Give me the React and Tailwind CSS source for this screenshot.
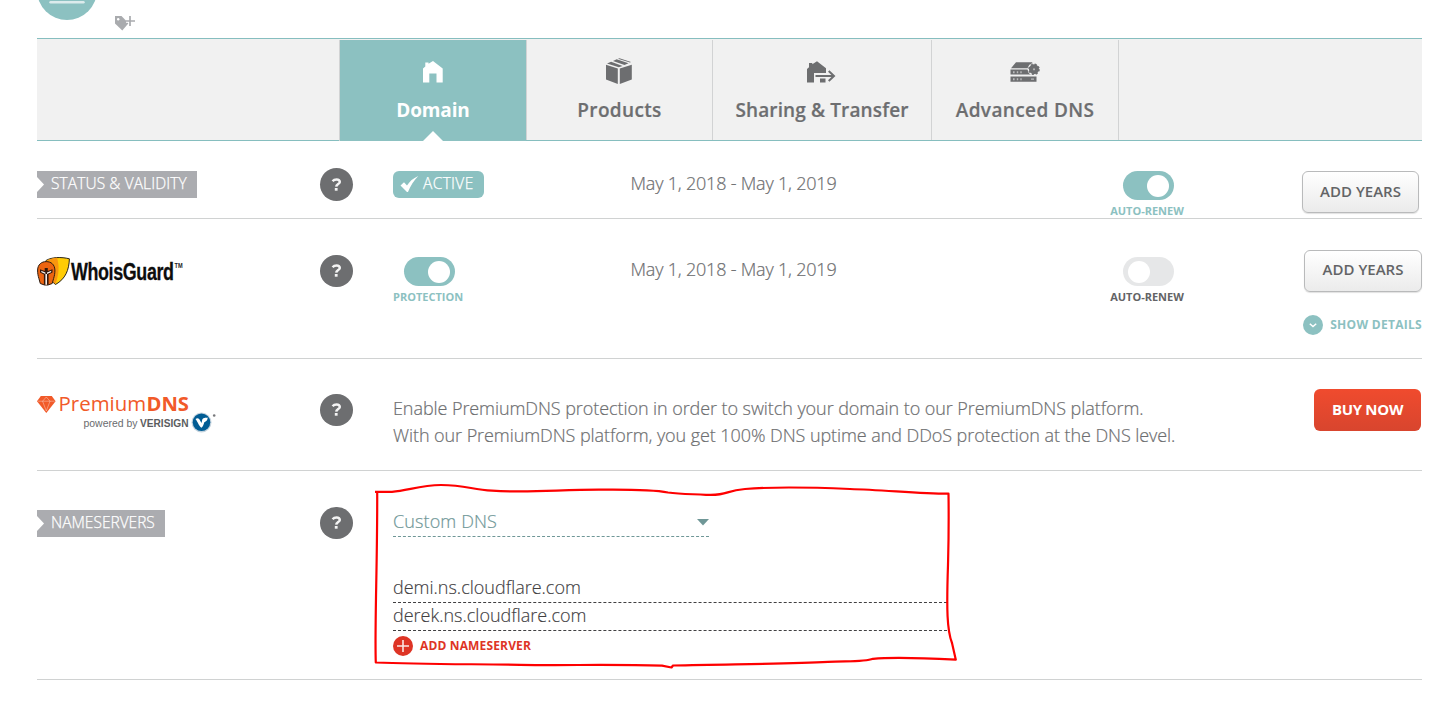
import React from "react";

function Help({ className = "h-[32px]" }) {
  return (
    <span className={"flex w-[33px] items-center justify-center rounded-full bg-[#6d6e70] " + className}>
      <svg className="-mt-px" width="11" height="13" viewBox="0 0 11 13" fill="none">
        <path d="M1.6 3.2 C2.6 1.9 4 1.4 5.6 1.4 C7.8 1.4 8.8 2.4 8.8 3.9 C8.8 6 5.4 6 5.2 8.6" stroke="#f4f4f4" strokeWidth="2.5" />
        <rect x="3.8" y="10" width="2.8" height="2.7" fill="#f4f4f4" />
      </svg>
    </span>
  );
}

function Tag({ children, className }) {
  return (
    <div className={"relative flex h-[27px] items-center bg-[#abacb0] pb-px pl-[14px] text-[15.5px] font-light text-white [-webkit-text-stroke:0.25px] " + className}>
      <svg className="absolute top-[6px] left-0" width="7" height="15" viewBox="0 0 7 15">
        <path d="M0 0 L7 7.5 L0 15 Z" fill="#fff" />
      </svg>
      {children}
    </div>
  );
}

function Toggle({ on, label, labelClass }) {
  return (
    <div className="flex flex-col items-center">
      <div className={on ? "ml-[2px] flex h-[29px] w-[51px] items-center justify-end rounded-full bg-[#8cc1c1] pr-[5px]" : "ml-[2px] flex h-[29px] w-[51px] items-center rounded-full bg-[#e6e7e8] pl-[5px]"}>
        <div className="h-[22px] w-[22px] rounded-full bg-white" />
      </div>
      <div className={"mt-1 text-[11px] leading-[14px] font-bold whitespace-nowrap " + labelClass}>{label}</div>
    </div>
  );
}

function Tab({ icon, label, className, labelClass }) {
  return (
    <div className={"relative flex flex-col items-center border-l border-[#d2d3d4] text-[19px] " + className}>
      <div className="flex h-[57px] items-center pt-[7px]">{icon}</div>
      <div className={"leading-[26px] whitespace-nowrap " + labelClass}>{label}</div>
    </div>
  );
}

const HomeIcon = (
  <svg width="20" height="22" viewBox="0 0 20 22" fill="#fff">
    <path d="M0 21.5 V7.5 L2.3 5.4 V1.5 H5.5 V2.8 L10 0 L19.7 7.5 V21.5 H13.5 V12.5 H6.3 V21.5 Z" />
  </svg>
);

const BoxIcon = (
  <svg className="-mt-[2px] -ml-[2px]" width="28" height="28" viewBox="0 0 28 28" fill="#6d6e70">
    <path d="M1 7.8 L12.8 11.6 V27 L1 22.5 Z M14.8 11.6 L26.8 7.8 V22.5 L14.8 27 Z" />
    <path d="M2 6.5 L6.1 4.7 L17.6 9 L13.8 10.3 Z M8 4 L11.7 2.3 L23.5 6.2 L19.5 8 Z M13 1.7 L14.5 1.2 L26 5 L24.9 5.6 Z" />
  </svg>
);

const TransferIcon = (
  <svg className="-ml-[2px]" width="30" height="22" viewBox="0 0 30 22">
    <path d="M1 21.5 V8 L3 6.2 V2 H6.3 V3.3 L11 .2 L20 7.3 V12 H8 V21.5 Z M14 17.5 H19.5 V21.5 H14 Z" fill="#6d6e70" />
    <path d="M9 15 H28 M22.5 9.7 L28 15 L22.5 20.3" fill="none" stroke="#f1f1f1" strokeWidth="4" />
    <path d="M9.5 15 H28 M22.7 10 L28 15 L22.7 20" fill="none" stroke="#6d6e70" strokeWidth="2" />
  </svg>
);

const ServerIcon = (
  <svg width="30" height="22" viewBox="0 0 30 22">
    <path d="M6 1.2 H22 L26 7.3 H1 Z M.5 8.5 H26.5 V13.5 H.5 Z M.5 15.5 H26.5 V20.8 H.5 Z" fill="#6d6e70" />
    <path d="M3 10.2 h1.6 v2 h-1.6z M6.8 10.2 h1.4 v2 h-1.4z M10.3 10.2 h1.4 v2 h-1.4z M3 17.2 h1.6 v2 h-1.6z M6.8 17.2 h1.4 v2 h-1.4z M10.3 17.2 h1.4 v2 h-1.4z M21 17.6 h3 v1.2 h-3z" fill="#b9babb" />
    <circle cx="24" cy="8.3" r="6.4" fill="#f1f1f1" />
    <circle cx="24" cy="8.3" r="5" fill="#6d6e70" />
    <circle cx="24" cy="8.3" r="5" fill="none" stroke="#6d6e70" strokeWidth="1.6" strokeDasharray="2 1.93" />
    <circle cx="24" cy="8.3" r="1.1" fill="#b4b4b4" />
  </svg>
);

function WhoisGuard() {
  return (
    <svg width="160" height="40" viewBox="0 -4 160 40">
      <path d="M9 4.5 C15 1 24 .8 32.4 2.8 C32 14 28.5 23 18.5 28.5 L9 20 Z" fill="#ffcc05" stroke="#2b2417" strokeWidth="1" />
      <path d="M9.5 4.8 C14 2.3 17 2 20 1.8 C22.5 10 22 18 18.5 28 L9 20 Z" fill="#f9960f" />
      <path d="M.6 14 C.8 8.5 4.5 5.6 9.2 5.6 C14 5.6 17.7 8.5 17.9 14 C18 17 17.4 20 16.6 22.5 L15.2 27.5 L11 29 H7.5 L3.3 27.5 L1.9 22.5 C1.1 20 .5 17 .6 14 Z" fill="#ec6410" stroke="#2e1c12" strokeWidth="1" />
      <path d="M3 13.2 L7.7 15 V12 H10.8 V15 L15.5 13.2 V16.5 L11.6 18.6 V28.8 H6.9 V18.6 L3 16.5 Z" fill="#33180c" />
      <path d="M4.1 14.8 L8.4 16.4 V28.8 H10 V16.4 L14.4 14.8 L14 16.2 L10 18 H8.4 L4.5 16.2 Z" fill="#f6efe9" />
      <text transform="translate(34 24) scale(0.73 1)" fontFamily="Liberation Sans, sans-serif" fontWeight="700" fontSize="24.5" letterSpacing="-0.5" fill="#0d0d0d" stroke="#0d0d0d" strokeWidth=".3">WhoisGuard</text>
      <text transform="translate(137.5 12) scale(0.75 1)" fontFamily="Liberation Sans, sans-serif" fontWeight="700" fontSize="7.5" fill="#222">TM</text>
    </svg>
  );
}

function PremiumDNS() {
  return (
    <svg width="182" height="54" viewBox="0 -8 182 54">
      <path d="M3.8 3 H14.8 L18.6 8.2 L9.3 20 L0 8.2 Z" fill="#f15a29" />
      <path d="M1 8.2 H17.6 M5.6 8.2 L9.3 18 L13 8.2 M5.6 8.2 L9.3 4 L13 8.2" fill="none" stroke="#fff" strokeOpacity=".5" strokeWidth=".7" />
      <text x="21.6" y="18" textLength="87.5" lengthAdjust="spacingAndGlyphs" fontFamily="Open Sans, sans-serif" fontWeight="400" fontSize="20" fill="#f15a29">Premium</text>
      <text x="109.5" y="18" textLength="42.5" lengthAdjust="spacingAndGlyphs" fontFamily="Open Sans, sans-serif" fontWeight="700" fontSize="20" fill="#f15a29">DNS</text>
      <text x="46.5" y="34" textLength="54" lengthAdjust="spacingAndGlyphs" fontFamily="Liberation Sans, sans-serif" fontSize="11.5" fill="#6a6b6e">powered by</text>
      <text x="103" y="34" textLength="48.5" lengthAdjust="spacingAndGlyphs" fontFamily="Liberation Sans, sans-serif" fontWeight="700" fontSize="11" fill="#5b5d60">VERISIGN</text>
      <circle cx="164.5" cy="29.5" r="10" fill="#c5d4de" />
      <circle cx="164.5" cy="29.3" r="8.8" fill="#015c94" />
      <path d="M158.5 26 C160.5 24.5 162 25.3 162.8 27 L164.5 30 C165.5 27.5 164.5 25.5 167.3 25 C169 24.8 170 25 170.8 24.6 C170.3 27.5 169.3 28.8 167.3 29.2 C166.5 31.5 166 33.5 164.5 34.7 C162.5 34 161 29.5 158.5 26 Z" fill="#fff" />
      <circle cx="177.2" cy="22.5" r="1.3" fill="#77787b" />
    </svg>
  );
}

const row = "grid grid-cols-[283px_73px_237.5px_479.5px_74px_1fr] border-b border-[#d0d2d2]";
const bodyText = "text-[18px] leading-[27px] font-light [-webkit-text-stroke:0.2px]";
const button = "flex h-[42px] items-center justify-center rounded-[6px] border border-[#b9babb] bg-linear-to-b from-white to-[#ebebeb] text-[15px] font-semibold text-[#636466] shadow-[0_1px_1px_rgba(0,0,0,0.12)]";

export default function App() {
  return (
    <div className="h-[701px] w-[1447px] overflow-hidden bg-white font-['Open_Sans',sans-serif] text-[#6d6e70]">
      <div className="ml-[37px] w-[1385px]">
        <header className="flex h-[38px] items-start">
          <svg width="60" height="20" viewBox="0 0 60 20">
            <circle cx="30" cy="-10" r="30" fill="#8cc1c1" />
            <path d="M13.5 2.3 H46.5" stroke="#dcebec" strokeWidth="2.4" strokeLinecap="round" />
          </svg>
          <svg className="mt-[15px] ml-[17px]" width="22" height="17" viewBox="0 0 22 17">
            <path d="M1 1 H7.5 L14.5 8.2 L8.3 15.5 L1 8.5 Z" fill="#a9abae" />
            <circle cx="4.2" cy="4.2" r="1.2" fill="#fff" />
            <path d="M16 .8 V11.5 M12 6.2 H21" stroke="#fff" strokeWidth="3" />
            <path d="M16 1 V11 M11.8 6 H21" stroke="#a9abae" strokeWidth="1.7" />
          </svg>
        </header>

        <nav className="flex h-[103px] border-y border-[#86bebf] bg-[#f1f1f1] pt-px pl-[302px]">
          <Tab
            icon={HomeIcon}
            label="Domain"
            className="-mb-px w-[187px] bg-[#8cc1c1] text-white"
            labelClass="font-bold tracking-[-0.15px]"
          />
          <Tab icon={BoxIcon} label="Products" className="w-[186px]" labelClass="font-semibold tracking-[0.35px] [-webkit-text-stroke:0.2px]" />
          <Tab icon={TransferIcon} label="Sharing & Transfer" className="w-[219px]" labelClass="font-semibold tracking-[0.13px] [-webkit-text-stroke:0.2px]" />
          <Tab icon={ServerIcon} label="Advanced DNS" className="w-[187px]" labelClass="font-semibold tracking-[0.38px] [-webkit-text-stroke:0.2px]" />
          <div className="w-px bg-[#d2d3d4]" />
          <svg className="absolute top-[131px] left-[423px]" width="20" height="10" viewBox="0 0 20 10">
            <path d="M0 10 L10 0 L20 10 Z" fill="#fff" />
          </svg>
        </nav>

        <section className={row + " h-[78px]"}>
          <div className="pt-[30px]"><Tag className="w-[160px] tracking-[0.1px]">STATUS &amp; VALIDITY</Tag></div>
          <div className="pt-[27px]"><Help className="h-[33px]" /></div>
          <div className="pt-[30px]">
            <div className="flex h-[27px] w-[91px] items-center rounded-[6px] bg-[#8cc1c1] pb-px pl-[7px] text-[15.5px] font-light tracking-[0.35px] text-white [-webkit-text-stroke:0.25px]">
              <svg className="mt-px mr-[4px]" width="19" height="17" viewBox="0 0 19 17">
                <path d="M.5 9.5 L4 6.2 L7 9.5 C9.5 5.5 13 2.3 18.3 0 C14 4.5 10.5 9.5 8 16 H7 Z" fill="#fff" />
              </svg>
              ACTIVE
            </div>
          </div>
          <div className={bodyText + " pt-[29px] tracking-[-0.2px]"}>May 1, 2018 - May 1, 2019</div>
          <div className="pt-[30px]"><Toggle on label="AUTO-RENEW" labelClass="text-[#8cc1c1]" /></div>
          <div className="flex justify-end pt-[30px] pr-[3px]"><div className={button + " w-[117px] pb-px"}>ADD YEARS</div></div>
        </section>

        <section className={row + " h-[140px]"}>
          <div className="pt-[33px]"><WhoisGuard /></div>
          <div className="pt-[36px]"><Help /></div>
          <div className="flex items-start pt-[38px]"><Toggle on label="PROTECTION" labelClass="text-[#8cc1c1]" /></div>
          <div className={bodyText + " pt-[37px] tracking-[-0.2px]"}>May 1, 2018 - May 1, 2019</div>
          <div className="pt-[38px]"><Toggle label="AUTO-RENEW" labelClass="text-[#636466]" /></div>
          <div className="flex flex-col items-end pt-[31px]">
            <div className={button + " w-[118px] pb-[3px]"}>ADD YEARS</div>
            <div className="mt-[22px] flex items-center gap-[7px] text-[12px] leading-5 font-bold tracking-[0.3px] text-[#8cc1c1]">
              <svg width="20" height="20" viewBox="0 0 20 20">
                <circle cx="10" cy="10" r="10" fill="#8cc1c1" />
                <path d="M6.8 8.8 L10 11.6 L13.2 8.8" fill="none" stroke="#fff" strokeWidth="1.5" />
              </svg>
              <span className="pt-px">SHOW DETAILS</span>
            </div>
          </div>
        </section>

        <section className={row + " h-[112px]"}>
          <div className="pt-[26px]"><PremiumDNS /></div>
          <div className="pt-[35px]"><Help /></div>
          <div className={bodyText + " col-span-3 pt-[36px] tracking-[-0.075px] whitespace-nowrap"}>
            <p>Enable PremiumDNS protection in order to switch your domain to our PremiumDNS platform.</p>
            <p>With our PremiumDNS platform, you get 100% DNS uptime and DDoS protection at the DNS level.</p>
          </div>
          <div className="flex justify-end pt-[30px] pr-px">
            <div className="flex h-[42px] w-[107px] items-center justify-center rounded-[6px] bg-linear-to-b from-[#f04b2e] to-[#d8452e] pb-px text-[15px] font-bold tracking-[-0.3px] text-white">BUY NOW</div>
          </div>
        </section>

        <section className={row + " relative h-[209px]"}>
          <div className="pt-[39px]"><Tag className="w-[128px]">NAMESERVERS</Tag></div>
          <div className="pt-[36px]"><Help /></div>
          <div className="col-span-3 pt-[35px] text-[18px] font-light">
            <div className="flex h-[31px] w-[316px] items-center justify-between border-b border-dashed border-[#6f9797] tracking-[0.12px] text-[#6f9797] [-webkit-text-stroke:0.2px]">
              Custom DNS
              <svg className="mt-[2px]" width="12" height="7" viewBox="0 0 12 7"><path d="M0 0 H12 L6 6.5 Z" fill="#6f9797" /></svg>
            </div>
            <div className="mt-[38px] flex h-[28px] w-[554px] items-center border-b border-dashed border-[#414042] pb-[2px] leading-[25px] text-[#414042] [-webkit-text-stroke:0.15px]">demi.ns.cloudflare.com</div>
            <div className="flex h-[28px] w-[554px] items-center border-b border-dashed border-[#414042] pb-[2px] leading-[25px] text-[#414042] [-webkit-text-stroke:0.15px]">derek.ns.cloudflare.com</div>
            <div className="mt-[4px] flex items-center gap-[7px] text-[12px] leading-5 font-bold tracking-[0.15px] text-[#de3425]">
              <svg width="20" height="20" viewBox="0 0 20 20">
                <circle cx="10" cy="10" r="10" fill="#de3425" />
                <path d="M10 4 V16 M4 10 H16" stroke="#fbe6e4" strokeWidth="1.6" />
              </svg>
              <span className="pt-px">ADD NAMESERVER</span>
            </div>
          </div>
          <svg className="absolute top-[9px] left-[333px]" width="595" height="194" viewBox="370 480 595 194" fill="none" stroke="#fe0000" strokeWidth="2.2" strokeLinejoin="round">
            <path d="M375 491.8 H392 C408 490.5 420 485.3 441 485 C466 485 472 489.8 492 490.7 C530 493 560 489.6 600 489.7 C630 489.4 655 490 668 492.5 C680 494.2 690 494 706 494.8 C729 496 724 490.5 745 489 C775 486.5 810 487.3 850 489 C885 490 920 493.8 948.5 493.7 C949 530 948.5 545 948 565 C946.5 610 947 630 952 643 L955.8 659.7 C925 658 890 657 873 658.8 C865 662 850 661 828 661.8 C790 664 740 664 673 665.5 L671.5 667.5 L662 665.7 C610 664 565 665.7 520 664.8 C480 664 420 664.5 375.8 662.5 C374.5 630 377.5 560 377.2 491.8" />
          </svg>
        </section>
      </div>
    </div>
  );
}
